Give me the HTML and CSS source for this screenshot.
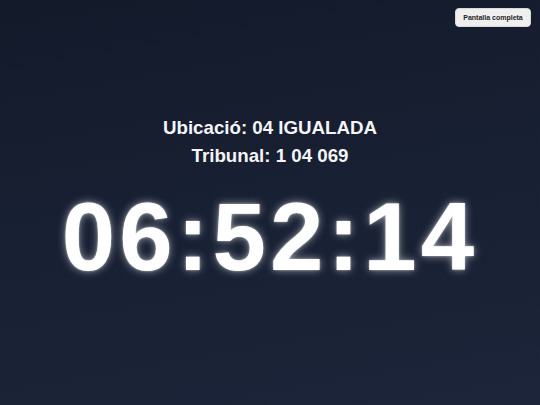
FILE: index.html
```html
<!DOCTYPE html>
<html lang="ca">
<head>
<meta charset="utf-8">
<title>Rellotge</title>
<link rel="stylesheet" href="styles.css">
</head>
<body>
<button class="fullscreen-btn" type="button">Pantalla completa</button>
<main class="screen">
  <div class="info">
    <div class="info-line">Ubicació: 04 IGUALADA</div>
    <div class="info-line">Tribunal: 1 04 069</div>
  </div>
  <div class="clock">06:52:14</div>
</main>
</body>
</html>
```

FILE: styles.css
```css
html, body {
  margin: 0;
  padding: 0;
  height: 100%;
}

body {
  font-family: "Liberation Sans", Arial, sans-serif;
  background: linear-gradient(170deg, #131a2a 0%, #182033 50%, #1c2539 100%);
  color: #ffffff;
  overflow: hidden;
}

.screen {
  height: 405px;
  display: flex;
  flex-direction: column;
  align-items: center;
  justify-content: center;
}

.info {
  display: flex;
  flex-direction: column;
  align-items: center;
}

.info-line {
  font-size: 18.72px;
  font-weight: 700;
  line-height: 28px;
  color: #f4f5f7;
}

.clock {
  margin-top: 19px;
  margin-bottom: 6px;
  font-size: 96px;
  font-weight: 700;
  line-height: 1;
  letter-spacing: 4px;
  color: #ffffff;
  text-shadow: 0 0 8px rgba(255, 255, 255, 0.55), 0 0 2px rgba(255, 255, 255, 0.6);
}

.fullscreen-btn {
  position: absolute;
  top: 8px;
  right: 9px;
  width: 76px;
  height: 19px;
  padding: 0;
  border: 1px solid #d9d9d9;
  border-radius: 4px;
  background: #efefef;
  color: #1f1f1f;
  font-family: "Liberation Sans", Arial, sans-serif;
  font-size: 7px;
  font-weight: 700;
  cursor: pointer;
}
```
